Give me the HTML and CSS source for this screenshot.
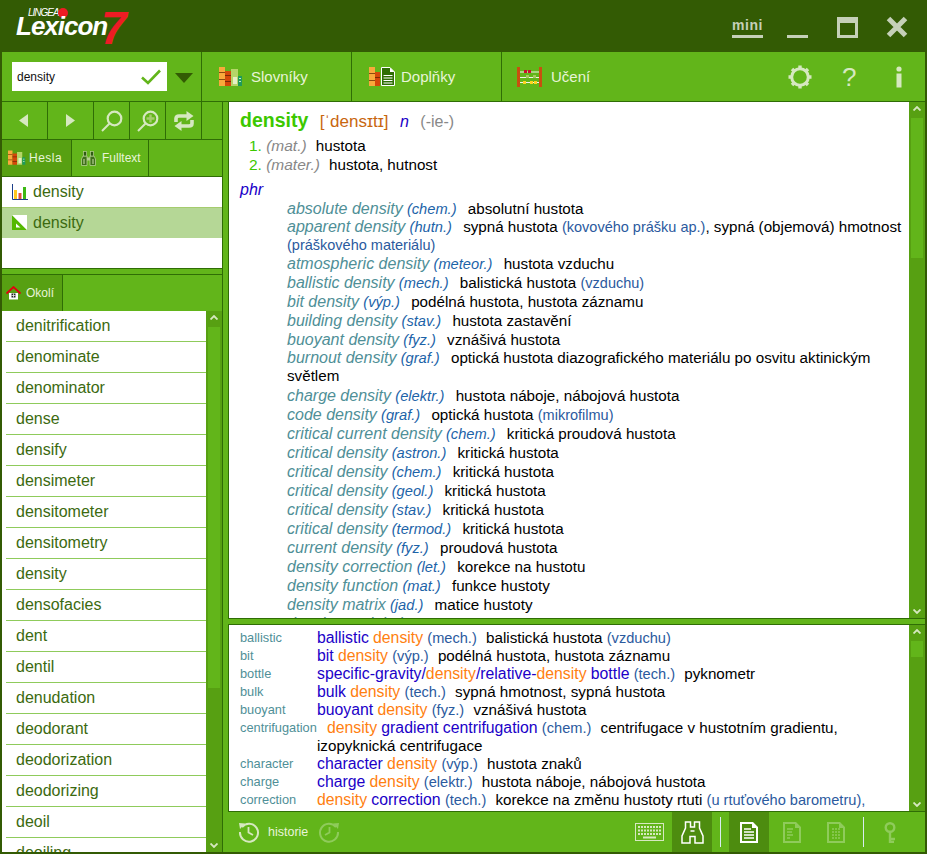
FILE: index.html
```html
<!DOCTYPE html>
<html lang="cs">
<head>
  <meta charset="UTF-8">
  <title>Lingea Lexicon 7</title>
  <link rel="stylesheet" href="styles.css">
</head>
<body>
  <svg class="defs" width="0" height="0">
    <defs>
      <symbol id="books" viewBox="0 0 24 20">
        <rect x="0" y="0" width="6" height="19" fill="#f9a93c"/>
        <rect x="0" y="5" width="6" height="1" fill="#8a4a10"/>
        <rect x="0" y="12" width="6" height="1" fill="#8a4a10"/>
        <rect x="6" y="4" width="6" height="15" fill="#d4480a"/>
        <rect x="6" y="8" width="6" height="1" fill="#7a2a05"/>
        <rect x="6" y="14" width="6" height="1" fill="#7a2a05"/>
        <rect x="12" y="2" width="7" height="17" fill="#b5d568"/>
        <rect x="14" y="10" width="4" height="7" fill="#e6efc4"/>
        <rect x="19" y="9" width="4" height="10" fill="#1f9a5a"/>
        <rect x="20" y="11" width="2" height="1" fill="#bfe8c8"/>
        <rect x="20" y="14" width="2" height="1" fill="#bfe8c8"/>
      </symbol>
      <symbol id="chevron-up" viewBox="0 0 8 5">
        <path d="M0.5 4.5 L4 1 L7.5 4.5" fill="none" stroke="#d6e8c0" stroke-width="1.8"/>
      </symbol>
      <symbol id="chevron-down" viewBox="0 0 8 5">
        <path d="M0.5 0.5 L4 4 L7.5 0.5" fill="none" stroke="#d6e8c0" stroke-width="1.8"/>
      </symbol>
    </defs>
  </svg>

  <div class="app">
    <div class="titlebar">
      <div class="logo">
        <span class="logo-lingea">LINGEA</span>
        <span class="logo-dot"></span>
        <span class="logo-name">Lexicon</span>
        <span class="logo-seven">7</span>
      </div>
      <div class="win-buttons">
        <span class="win-mini">mini</span>
        <span class="win-min"></span>
        <span class="win-max"></span>
        <svg class="win-close" width="22" height="22" viewBox="0 0 22 22">
          <path d="M2.5 2.5 L19.5 19.5 M19.5 2.5 L2.5 19.5" stroke="#c5d0b8" stroke-width="5"/>
        </svg>
      </div>
    </div>

    <div class="toolbar">
      <div class="search-cell">
        <div class="search-box">
          <span class="search-text">density</span>
          <svg width="20" height="16" viewBox="0 0 20 16">
            <path d="M1 8.5 L7 14 L19 1.5" fill="none" stroke="#62b51a" stroke-width="2.6"/>
          </svg>
        </div>
        <span class="search-drop"></span>
      </div>
      <div class="tool-btn tool-dict">
        <svg width="24" height="20"><use href="#books"/></svg>
        <span>Slovníky</span>
      </div>
      <div class="tool-btn tool-add">
        <svg width="27" height="20" viewBox="0 0 27 20">
          <rect x="0" y="0" width="6" height="19" fill="#f9a93c"/>
          <rect x="6" y="5" width="5" height="14" fill="#d4480a"/>
          <rect x="0" y="6" width="6" height="1" fill="#8a4a10"/>
          <rect x="0" y="13" width="6" height="1" fill="#8a4a10"/>
          <rect x="6" y="10" width="5" height="1" fill="#7a2a05"/>
          <path d="M12.5 0.5 H21 L25.5 5 V18.5 H12.5 Z" fill="#2f6d05" stroke="#fff" stroke-width="1"/>
          <path d="M21 0.5 L25.5 5 H21 Z" fill="#fff"/>
          <path d="M14.5 8.5 H23.5 M14.5 11 H23.5 M14.5 13.5 H23.5 M14.5 16 H23.5" stroke="#fff"/>
        </svg>
        <span>Doplňky</span>
      </div>
      <div class="tool-btn tool-learn">
        <svg width="26" height="20" viewBox="0 0 26 20">
          <rect x="0" y="0" width="3" height="20" fill="#c8500f"/>
          <rect x="22" y="0" width="3" height="20" fill="#c8500f"/>
          <path d="M3 5 H22 M3 10.5 H22 M3 15.5 H22" stroke="#f2f5e8" stroke-width="1"/>
          <rect x="7" y="3" width="3" height="3" fill="#c8102e"/>
          <rect x="11" y="3" width="3" height="3" fill="#c8102e"/>
          <rect x="9" y="8" width="3" height="3" fill="#a5c95e"/>
          <rect x="16" y="8" width="3" height="3" fill="#a5c95e"/>
          <rect x="6" y="14" width="3" height="3" fill="#ffd21e"/>
          <rect x="13" y="14" width="3" height="3" fill="#ffd21e"/>
          <rect x="17" y="14" width="3" height="3" fill="#ffd21e"/>
        </svg>
        <span>Učení</span>
      </div>
      <div class="tool-right">
        <svg width="26" height="26" viewBox="0 0 26 26">
          <circle cx="13" cy="13" r="8.3" fill="none" stroke="#d6e8c0" stroke-width="3"/>
          <path d="M13 1.500 V5 M13 21 V24.500 M1.500 13 H5 M21 13 H24.500 M5 5 L7.300 7.300 M18.700 18.700 L21 21 M5 21 L7.300 18.700 M18.700 7.300 L21 5" stroke="#d6e8c0" stroke-width="3.400"/>
        </svg>
        <span class="tool-help">?</span>
        <svg width="6" height="22" viewBox="0 0 6 22">
          <circle cx="3" cy="3" r="2.600" fill="#d6e8c0"/>
          <rect x="0.500" y="7.500" width="5" height="14" fill="#d6e8c0"/>
        </svg>
      </div>
    </div>

    <div class="workspace">
      <div class="left">
        <div class="nav-row">
          <div class="nav-btn nav-wide">
            <svg class="nav-back" width="10" height="13" viewBox="0 0 10 13"><path d="M9 0 V13 L0 6.5 Z" fill="#d6e8c0"/></svg>
          </div>
          <div class="nav-btn nav-wide">
            <svg width="10" height="13" viewBox="0 0 10 13"><path d="M0 0 V13 L9 6.5 Z" fill="#d6e8c0"/></svg>
          </div>
          <div class="nav-btn">
            <svg width="22" height="22" viewBox="0 0 22 22">
              <circle cx="13.5" cy="8.5" r="6.8" fill="none" stroke="#d6e8c0" stroke-width="2.200"/>
              <path d="M8.5 13.5 L1 21" stroke="#d6e8c0" stroke-width="2"/>
            </svg>
          </div>
          <div class="nav-btn">
            <svg width="22" height="22" viewBox="0 0 22 22">
              <circle cx="13.5" cy="8.5" r="6.8" fill="none" stroke="#d6e8c0" stroke-width="2.200"/>
              <path d="M8.5 13.5 L1 21" stroke="#d6e8c0" stroke-width="2"/>
              <path d="M13.5 4.5 V12.5 M9.5 8.5 H17.5" stroke="#a5cc6e" stroke-width="2.400"/>
            </svg>
          </div>
          <div class="nav-btn">
            <svg width="20" height="20" viewBox="0 0 20 20">
              <path d="M2 11 V7.500 Q2 5 5 5 H13" fill="none" stroke="#d6e8c0" stroke-width="3.600"/>
              <path d="M12.500 0 L19.500 5 L12.500 10 Z" fill="#d6e8c0"/>
              <path d="M18 9 V12.500 Q18 15 15 15 H7" fill="none" stroke="#d6e8c0" stroke-width="3.600"/>
              <path d="M7.500 10 L0.500 15 L7.500 20 Z" fill="#d6e8c0"/>
            </svg>
          </div>
        </div>

        <div class="tabs tabs-top">
          <div class="tab tab-on tab-hesla">
            <svg width="18" height="16"><use href="#books"/></svg>
            <span>Hesla</span>
          </div>
          <div class="tab tab-full">
            <svg width="15" height="15" viewBox="0 0 15 15">
              <path d="M2 5 H6 V14.500 H0.500 V8 Z M13 5 H9 V14.500 H14.500 V8 Z" fill="#3f6f1c" stroke="#b5cf90" stroke-width="0.800"/>
              <rect x="2.500" y="0.500" width="3" height="4.500" fill="#2f5a14" stroke="#b5cf90" stroke-width="0.700"/>
              <rect x="9.500" y="0.500" width="3" height="4.500" fill="#2f5a14" stroke="#b5cf90" stroke-width="0.700"/>
              <rect x="6" y="6.500" width="3" height="3" fill="#b5cf90"/>
              <path d="M3 8 V13 M12 8 V13" stroke="#b5cf90" stroke-width="1.200"/>
            </svg>
            <span>Fulltext</span>
          </div>
        </div>

        <div class="hits">
          <div class="hit">
            <svg width="16" height="16" viewBox="0 0 16 16">
              <path d="M0.500 0 V15.500 H16" fill="none" stroke="#1c3f8a"/>
              <rect x="2" y="6" width="3" height="9" fill="#ffc81e"/>
              <rect x="6.500" y="9" width="3" height="6" fill="#e0503c"/>
              <rect x="11" y="3" width="3" height="12" fill="#3cb814"/>
            </svg>
            <span>density</span>
          </div>
          <div class="hit hit-on">
            <svg width="16" height="16" viewBox="0 0 16 16">
              <path d="M0 0 L15 15 H0 Z" fill="#54b800"/>
              <path d="M4 8.500 L8.500 12.500 H4 Z" fill="#fff"/>
              <path d="M0 0 L15 0 V15 Z" fill="#fff"/>
            </svg>
            <span>density</span>
          </div>
        </div>

        <div class="near">
          <div class="tabs">
            <div class="tab tab-on tab-okoli">
              <svg width="15" height="14" viewBox="0 0 15 14">
                <path d="M3 7 H12 V13.500 H3 Z" fill="#fff"/>
                <path d="M0.500 7.500 L7.500 1 L14.500 7.500" fill="none" stroke="#e3000f" stroke-width="1.800"/>
                <rect x="5.500" y="7.500" width="4" height="4" fill="#222"/>
                <path d="M7.500 7.500 V11.500 M5.500 9.500 H9.500" stroke="#fff" stroke-width="0.700"/>
              </svg>
              <span>Okolí</span>
            </div>
          </div>
          <div class="near-body">
            <div class="near-list">
              <div class="near-item">denitrification</div>
              <div class="near-item">denominate</div>
              <div class="near-item">denominator</div>
              <div class="near-item">dense</div>
              <div class="near-item">densify</div>
              <div class="near-item">densimeter</div>
              <div class="near-item">densitometer</div>
              <div class="near-item">densitometry</div>
              <div class="near-item">density</div>
              <div class="near-item">densofacies</div>
              <div class="near-item">dent</div>
              <div class="near-item">dentil</div>
              <div class="near-item">denudation</div>
              <div class="near-item">deodorant</div>
              <div class="near-item">deodorization</div>
              <div class="near-item">deodorizing</div>
              <div class="near-item">deoil</div>
              <div class="near-item">deoiling</div>
            </div>
            <div class="scroll">
              <svg class="scroll-up" width="8" height="5"><use href="#chevron-up"/></svg>
              <div class="thumb thumb-near"></div>
              <svg class="scroll-down" width="8" height="5"><use href="#chevron-down"/></svg>
            </div>
          </div>
        </div>
      </div>

      <div class="right">
        <div class="pane pane-entry">
          <div class="entry">
            <div class="head">
              <span class="hw">density</span>
              <span class="pron">[ˈdensɪtɪ]</span>
              <span class="pos">n</span>
              <span class="infl">(-ie-)</span>
            </div>
            <div class="sense"><span class="num">1.</span> <i class="lab">(mat.)</i> hustota</div>
            <div class="sense"><span class="num">2.</span> <i class="lab">(mater.)</i> hustota, hutnost</div>
            <div class="phr">phr</div>
            <div class="phrases">
              <p><i class="ph">absolute density</i> <i class="dom">(chem.)</i> absolutní hustota</p>
              <p class="wrapped"><i class="ph">apparent density</i> <i class="dom">(hutn.)</i> sypná hustota <span class="note">(kovového prášku ap.)</span>, sypná (objemová) hmotnost <span class="note">(práškového materiálu)</span></p>
              <p><i class="ph">atmospheric density</i> <i class="dom">(meteor.)</i> hustota vzduchu</p>
              <p><i class="ph">ballistic density</i> <i class="dom">(mech.)</i> balistická hustota <span class="note">(vzduchu)</span></p>
              <p><i class="ph">bit density</i> <i class="dom">(výp.)</i> podélná hustota, hustota záznamu</p>
              <p><i class="ph">building density</i> <i class="dom">(stav.)</i> hustota zastavění</p>
              <p><i class="ph">buoyant density</i> <i class="dom">(fyz.)</i> vznášivá hustota</p>
              <p class="wrapped wrapped-gap"><i class="ph">burnout density</i> <i class="dom">(graf.)</i> optická hustota diazografického materiálu po osvitu aktinickým světlem</p>
              <p><i class="ph">charge density</i> <i class="dom">(elektr.)</i> hustota náboje, nábojová hustota</p>
              <p><i class="ph">code density</i> <i class="dom">(graf.)</i> optická hustota <span class="note">(mikrofilmu)</span></p>
              <p><i class="ph">critical current density</i> <i class="dom">(chem.)</i> kritická proudová hustota</p>
              <p><i class="ph">critical density</i> <i class="dom">(astron.)</i> kritická hustota</p>
              <p><i class="ph">critical density</i> <i class="dom">(chem.)</i> kritická hustota</p>
              <p><i class="ph">critical density</i> <i class="dom">(geol.)</i> kritická hustota</p>
              <p><i class="ph">critical density</i> <i class="dom">(stav.)</i> kritická hustota</p>
              <p><i class="ph">critical density</i> <i class="dom">(termod.)</i> kritická hustota</p>
              <p><i class="ph">current density</i> <i class="dom">(fyz.)</i> proudová hustota</p>
              <p><i class="ph">density correction</i> <i class="dom">(let.)</i> korekce na hustotu</p>
              <p><i class="ph">density function</i> <i class="dom">(mat.)</i> funkce hustoty</p>
              <p><i class="ph">density matrix</i> <i class="dom">(jad.)</i> matice hustoty</p>
              <p><i class="ph">density modulation</i> <i class="dom">(elektr.)</i> modulace hustoty</p>
            </div>
          </div>
          <div class="scroll">
            <svg class="scroll-up" width="8" height="5"><use href="#chevron-up"/></svg>
            <div class="thumb thumb-entry"></div>
            <svg class="scroll-down" width="8" height="5"><use href="#chevron-down"/></svg>
          </div>
        </div>

        <div class="pane pane-colloc">
          <div class="colloc">
            <div class="row"><span class="key">ballistic</span><div class="val"><span class="en">ballistic</span> <span class="hl">density</span> <span class="note">(mech.)</span> balistická hustota <span class="note">(vzduchu)</span></div></div>
            <div class="row"><span class="key">bit</span><div class="val"><span class="en">bit</span> <span class="hl">density</span> <span class="note">(výp.)</span> podélná hustota, hustota záznamu</div></div>
            <div class="row"><span class="key">bottle</span><div class="val"><span class="en">specific-gravity/</span><span class="hl">density</span><span class="en">/relative-</span><span class="hl">density</span> <span class="en">bottle</span> <span class="note">(tech.)</span> pyknometr</div></div>
            <div class="row"><span class="key">bulk</span><div class="val"><span class="en">bulk</span> <span class="hl">density</span> <span class="note">(tech.)</span> sypná hmotnost, sypná hustota</div></div>
            <div class="row"><span class="key">buoyant</span><div class="val"><span class="en">buoyant</span> <span class="hl">density</span> <span class="note">(fyz.)</span> vznášivá hustota</div></div>
            <div class="row"><span class="key">centrifugation</span><div class="val val-indent"><span class="hl">density</span> <span class="en">gradient centrifugation</span> <span class="note">(chem.)</span> centrifugace v hustotním gradientu, izopyknická centrifugace</div></div>
            <div class="row"><span class="key">character</span><div class="val"><span class="en">character</span> <span class="hl">density</span> <span class="note">(výp.)</span> hustota znaků</div></div>
            <div class="row"><span class="key">charge</span><div class="val"><span class="en">charge</span> <span class="hl">density</span> <span class="note">(elektr.)</span> hustota náboje, nábojová hustota</div></div>
            <div class="row"><span class="key">correction</span><div class="val"><span class="hl">density</span> <span class="en">correction</span> <span class="note">(tech.)</span> korekce na změnu hustoty rtuti <span class="note">(u rtuťového barometru),</span></div></div>
          </div>
          <div class="scroll">
            <svg class="scroll-up" width="8" height="5"><use href="#chevron-up"/></svg>
            <div class="thumb thumb-colloc"></div>
            <svg class="scroll-down" width="8" height="5"><use href="#chevron-down"/></svg>
          </div>
        </div>

        <div class="statusbar">
          <svg class="hist-back" width="22" height="22" viewBox="0 0 22 22">
            <path d="M4 6 A9 9 0 1 1 2 11" fill="none" stroke="#d6e8c0" stroke-width="2"/>
            <path d="M1 2 L7 2.500 L2 8 Z" fill="#d6e8c0"/>
            <path d="M10.500 6 V11.500 L15 14" fill="none" stroke="#d6e8c0" stroke-width="1.800"/>
          </svg>
          <span class="hist-label">historie</span>
          <svg class="hist-next" width="22" height="22" viewBox="0 0 22 22">
            <path d="M18 6 A9 9 0 1 0 20 11" fill="none" stroke="#8fcb5b" stroke-width="2"/>
            <path d="M21 2 L15 2.500 L20 8 Z" fill="#8fcb5b"/>
            <path d="M11.500 6 V11.500 L7 14" fill="none" stroke="#8fcb5b" stroke-width="1.800"/>
          </svg>
          <div class="status-right">
            <div class="st-btn st-keys">
              <svg width="29" height="18" viewBox="0 0 29 18">
                <rect x="0.500" y="0.500" width="28" height="17" fill="none" stroke="#d6e8c0"/>
                <path d="M3 4 H26 M3 7.500 H26 M3 11 H26" stroke="#d6e8c0" stroke-width="2" stroke-dasharray="2 1"/>
                <path d="M8 14.500 H21" stroke="#d6e8c0" stroke-width="2"/>
              </svg>
            </div>
            <div class="st-btn st-on">
              <svg width="23" height="23" viewBox="0 0 23 23">
                <path d="M4.500 1 H9.500 V6 H13.500 V1 H18.500 V7 L22 15 V22 H14 V15.500 H9 V22 H1 V15 L4.500 7 Z" fill="none" stroke="#fff" stroke-width="1.500"/>
                <path d="M9.500 10 H13.500" stroke="#fff" stroke-width="1.500"/>
              </svg>
            </div>
            <span class="st-sep"></span>
            <div class="st-btn st-on">
              <svg width="18" height="21" viewBox="0 0 18 21">
                <path d="M0 0 H13 L18 5 V21 H0 Z M2 2 V19 H16 V6 H12 V2 Z" fill="#fff" fill-rule="evenodd"/>
                <path d="M4 7 H11 M4 10 H14 M4 13 H14 M4 16 H14" stroke="#fff" stroke-width="1.500"/>
              </svg>
            </div>
            <div class="st-btn st-doc2">
              <svg width="18" height="21" viewBox="0 0 18 21">
                <path d="M0 0 H13 L18 5 V21 H0 Z M2 2 V19 H16 V6 H12 V2 Z" fill="#8fcb5b" fill-rule="evenodd"/>
                <path d="M4 7 H10 M4 10 H9 M4 13 H10 M4 16 H7" stroke="#8fcb5b" stroke-width="1.500"/>
              </svg>
            </div>
            <div class="st-btn st-doc3">
              <svg width="18" height="21" viewBox="0 0 18 21">
                <path d="M0 0 H13 L18 5 V21 H0 Z M2 2 V19 H16 V6 H12 V2 Z" fill="#8fcb5b" fill-rule="evenodd"/>
                <path d="M5 7 H13 M5 10 H13 M5 13 H13 M5 16 H13" stroke="#8fcb5b" stroke-width="1.500" stroke-dasharray="2 1"/>
              </svg>
            </div>
            <span class="st-sep st-sep-two"></span>
            <div class="st-btn">
              <svg width="14" height="21" viewBox="0 0 14 21">
                <circle cx="7" cy="5.500" r="4.300" fill="none" stroke="#8fcb5b" stroke-width="2.400"/>
                <path d="M7 10 V21 M7 17 H12 M7 20 H11" stroke="#8fcb5b" stroke-width="2.400"/>
              </svg>
            </div>
          </div>
        </div>
      </div>
    </div>
  </div>
</body>
</html>
```

FILE: styles.css
```css
* {
  box-sizing: border-box;
}
html, body {
  margin: 0;
  padding: 0;
}
body {
  width: 927px;
  height: 854px;
  overflow: hidden;
  font-family: "Liberation Sans", Arial, sans-serif;
  background-color: #335b04;
}
.defs {
  position: absolute;
}
svg {
  display: block;
  flex: none;
}
.app {
  display: flex;
  flex-direction: column;
  height: 854px;
  padding: 0 2px 2px 2px;
  background-color: #335b04;
}

/* titlebar */
.titlebar {
  display: flex;
  justify-content: space-between;
  height: 52px;
  margin: 0 -2px;
}
.logo {
  position: relative;
  width: 140px;
  margin-left: 14px;
}
.logo-lingea {
  position: absolute;
  left: 14px;
  top: 7px;
  color: #fff;
  font-size: 10px;
  font-style: italic;
  letter-spacing: -1px;
}
.logo-dot {
  position: absolute;
  left: 44px;
  top: 8px;
  width: 10px;
  height: 10px;
  border-radius: 50%;
  background-color: #ed1c24;
}
.logo-name {
  position: absolute;
  left: 2px;
  top: 11px;
  color: #fff;
  font-size: 26px;
  font-weight: bold;
  font-style: italic;
  letter-spacing: -1px;
}
.logo-seven {
  position: absolute;
  left: 87px;
  top: 2px;
  color: #ed1c24;
  font-size: 46px;
  line-height: 52px;
  font-weight: bold;
  font-style: italic;
}
.win-buttons {
  display: flex;
  align-items: flex-start;
  padding-right: 19px;
}
.win-mini {
  margin: 17px 24px 0 0;
  width: 31px;
  height: 21px;
  border-bottom: 3px solid #c5d0b8;
  color: #c5d0b8;
  font-size: 14px;
  line-height: 17px;
  font-weight: bold;
  letter-spacing: 0.5px;
  text-align: center;
}
.win-min {
  width: 21px;
  height: 3px;
  margin: 35px 29px 0 0;
  background-color: #c5d0b8;
}
.win-max {
  width: 21px;
  height: 21px;
  margin: 17px 28px 0 0;
  border: 3px solid #c5d0b8;
  border-top-width: 6px;
}
.win-close {
  margin-top: 16px;
}

/* toolbar */
.toolbar {
  display: flex;
  height: 50px;
  background-color: #62b51a;
  border-bottom: 1px solid #2f6d05;
}
.search-cell {
  display: flex;
  align-items: center;
  width: 200px;
  padding-left: 10px;
  border-right: 1px solid #2f6d05;
}
.search-box {
  display: flex;
  align-items: center;
  justify-content: space-between;
  width: 155px;
  height: 29px;
  padding: 0 6px 0 5px;
  background-color: #fff;
}
.search-text {
  font-size: 12px;
  color: #111;
}
.search-drop {
  width: 0;
  height: 0;
  margin-left: 8px;
  margin-top: 2px;
  border-left: 9px solid transparent;
  border-right: 9px solid transparent;
  border-top: 10px solid #335b04;
}
.tool-btn {
  display: flex;
  align-items: center;
  width: 150px;
  padding-left: 17px;
  border-right: 1px solid #2f6d05;
  color: #e8f4d8;
  font-size: 15px;
}
.tool-dict {
  gap: 8px;
}
.tool-add {
  gap: 5px;
}
.tool-learn {
  gap: 8px;
  padding-left: 15px;
  border-right: none;
}
.tool-right {
  display: flex;
  align-items: center;
  margin-left: auto;
  padding-right: 23px;
}
.tool-help {
  width: 14px;
  margin: 0 40px 0 29px;
  color: #d6e8c0;
  font-size: 26px;
  line-height: 26px;
}

/* left column */
.workspace {
  display: flex;
  flex: 1;
  min-height: 0;
}
.left {
  display: flex;
  flex-direction: column;
  width: 221px;
  background-color: #62b51a;
  border-right: 1px solid #2f6d05;
}
.nav-row {
  display: flex;
  height: 38px;
  border-bottom: 1px solid #2f6d05;
}
.nav-btn {
  display: flex;
  align-items: center;
  justify-content: center;
  width: 36px;
  border-right: 1px solid #2f6d05;
}
.nav-wide {
  width: 46px;
}
.nav-back {
  margin-right: 2px;
}
.tabs {
  display: flex;
  height: 36px;
  background-color: #62b51a;
}
.tabs-top {
  height: 37px;
  border-bottom: 1px solid #2f6d05;
}
.tab {
  display: flex;
  align-items: center;
  color: #e8f4d8;
  font-size: 12px;
  border-right: 1px solid #2f6d05;
}
.tab-on {
  background-color: #57a012;
}
.tab-hesla {
  width: 70px;
  padding-left: 6px;
  gap: 3px;
  letter-spacing: 0.5px;
}
.tab-full {
  width: 77px;
  padding-left: 9px;
  gap: 6px;
}
.tab-okoli {
  width: 61px;
  padding-left: 4px;
  gap: 5px;
}
.hits {
  height: 92px;
  background-color: #fff;
  border-bottom: 1px solid #2f6d05;
}
.hit {
  display: flex;
  align-items: center;
  gap: 5px;
  height: 31px;
  padding-left: 10px;
  color: #3c6a10;
  font-size: 16px;
  border-bottom: 1px solid #a5cc6e;
}
.hit:last-child {
  height: 30px;
  border-bottom: none;
}
.hit-on {
  background-color: #b5d796;
}
.near {
  display: flex;
  flex: 1;
  flex-direction: column;
  min-height: 0;
  margin-top: 5px;
  border-top: 1px solid #2f6d05;
}
.near-body {
  display: flex;
  flex: 1;
  min-height: 0;
}
.near-list {
  flex: 1;
  overflow: hidden;
  padding-left: 4px;
  background-color: #fff;
}
.near-item {
  height: 31px;
  padding-left: 10px;
  line-height: 30px;
  color: #3c6a10;
  font-size: 16px;
  border-bottom: 1px solid #8fcb5b;
}

/* scrollbars */
.scroll {
  position: relative;
  flex: none;
  width: 16px;
  background-color: #57a012;
}
.scroll-up {
  position: absolute;
  left: 4px;
  top: 4px;
}
.scroll-down {
  position: absolute;
  left: 4px;
  bottom: 4px;
}
.thumb {
  position: absolute;
  left: 2px;
  width: 12px;
  background-color: #62b51a;
}
.thumb-near {
  top: 16px;
  height: 361px;
}
.thumb-entry {
  top: 16px;
  height: 140px;
}
.thumb-colloc {
  top: 16px;
  height: 16px;
}

/* right column */
.right {
  display: flex;
  flex: 1;
  flex-direction: column;
  min-width: 0;
  padding-left: 5px;
  background-color: #62b51a;
}
.pane {
  display: flex;
  min-height: 0;
  background-color: #fff;
  border-left: 1px solid #2f6d05;
  border-bottom: 1px solid #2f6d05;
}
.pane-entry {
  height: 517px;
}
.pane-colloc {
  height: 188px;
  margin-top: 5px;
  border-top: 1px solid #2f6d05;
}
.entry {
  flex: 1;
  overflow: hidden;
  padding: 5px 4px 0 11px;
  font-size: 15.2px;
  line-height: 19px;
  color: #000;
}
.head {
  height: 29px;
  line-height: 26px;
  font-size: 16px;
}
.hw {
  margin-right: 7px;
  color: #3cc800;
  font-size: 19.5px;
  font-weight: bold;
}
.pron {
  margin-right: 7px;
  color: #c8660f;
  font-size: 17px;
}
.pos {
  margin-right: 7px;
  color: #2000c8;
  font-style: italic;
}
.infl {
  color: #888;
}
.sense {
  padding-left: 9px;
}
.num {
  color: #3cc800;
  font-size: 15.5px;
}
.lab {
  margin-right: 5px;
  color: #888;
  font-size: 15.5px;
}
.num, .lab, .ph, .dom, .note, .en, .hl {
  line-height: 1;
}
.phr {
  margin-top: 6px;
  color: #2000c8;
  font-size: 16px;
  font-style: italic;
}
.phrases {
  padding-left: 47px;
}
.phrases p {
  margin: 0;
}
.phrases .wrapped {
  line-height: 18px;
}
.phrases .wrapped-gap {
  margin-bottom: 1px;
}
.ph {
  color: #4f8f97;
  font-size: 16px;
}
.dom {
  margin-right: 7px;
  color: #1c63a8;
  font-size: 14.67px;
}
.note {
  color: #2b5a9e;
  font-size: 14.5px;
}
.colloc {
  flex: 1;
  overflow: hidden;
  padding: 4px 8px 0 11px;
  font-size: 15.2px;
  line-height: 18px;
}
.row {
  display: flex;
}
.key {
  flex: none;
  width: 77px;
  color: #4f8f97;
  font-size: 12.8px;
}
.val {
  flex: 1;
  min-width: 0;
}
.val-indent {
  text-indent: 10px;
}
.en {
  color: #2000c8;
  font-size: 15.8px;
}
.hl {
  color: #ff8010;
  font-size: 15.8px;
}
.val .note {
  margin-right: 5px;
  font-size: 14.6px;
}
.statusbar {
  display: flex;
  align-items: center;
  height: 40px;
  padding-left: 10px;
  background-color: #62b51a;
}
.hist-label {
  margin: 0 10px 0 8px;
  color: #e8f4d8;
  font-size: 12.5px;
}
.status-right {
  display: flex;
  align-items: stretch;
  height: 40px;
  margin-left: auto;
  padding-right: 15px;
}
.st-btn {
  display: flex;
  align-items: center;
  justify-content: center;
  width: 40px;
}
.st-keys {
  margin-right: 3px;
}
.st-doc2 {
  width: 45px;
}
.st-doc3 {
  width: 43px;
}
.st-on {
  background-color: #4d8c0f;
}
.st-sep {
  width: 1px;
  height: 30px;
  margin: 5px 8px;
  background-color: #d8ecf0;
}
.st-sep-two {
  margin-left: 6px;
  margin-right: 6px;
}
```
